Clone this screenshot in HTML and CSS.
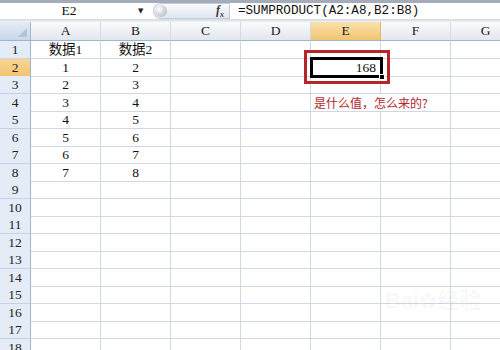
FILE: index.html
```html
<!DOCTYPE html>
<html lang="zh-CN">
<head>
    <meta charset="UTF-8">
    <title>SUMPRODUCT</title>
    <link rel="stylesheet" href="styles.css">
</head>
<body>
    <div class="app">
        <div class="topline"></div>
        <div class="fbar">
            <div class="namebox">E2</div>
            <div class="dd">&#9660;</div>
            <div class="fxbtn">
                <span class="knob"></span>
                <span class="fx">f<sub>x</sub></span>
            </div>
            <div class="formula">=SUMPRODUCT(A2:A8,B2:B8)</div>
        </div>
        <div class="strip"></div>

        <div class="sheet">
            <div class="row head">
                <div class="corner"></div>
                <div class="ch">A</div><div class="ch">B</div><div class="ch">C</div><div class="ch">D</div>
                <div class="ch sel">E</div><div class="ch">F</div><div class="ch">G</div>
            </div>
            <div class="row">
                <div class="rh">1</div>
                <div class="c">数据1</div><div class="c">数据2</div><div class="c"></div><div class="c"></div>
                <div class="c"></div><div class="c"></div><div class="c"></div>
            </div>
            <div class="row">
                <div class="rh sel">2</div>
                <div class="c">1</div><div class="c">2</div><div class="c"></div><div class="c"></div>
                <div class="c num">168</div><div class="c"></div><div class="c"></div>
            </div>
            <div class="row">
                <div class="rh">3</div>
                <div class="c">2</div><div class="c">3</div><div class="c"></div><div class="c"></div>
                <div class="c"></div><div class="c"></div><div class="c"></div>
            </div>
            <div class="row">
                <div class="rh">4</div>
                <div class="c">3</div><div class="c">4</div><div class="c"></div><div class="c"></div>
                <div class="c note">是什么值，怎么来的?</div><div class="c"></div><div class="c"></div>
            </div>
            <div class="row">
                <div class="rh">5</div>
                <div class="c">4</div><div class="c">5</div><div class="c"></div><div class="c"></div>
                <div class="c"></div><div class="c"></div><div class="c"></div>
            </div>
            <div class="row">
                <div class="rh">6</div>
                <div class="c">5</div><div class="c">6</div><div class="c"></div><div class="c"></div>
                <div class="c"></div><div class="c"></div><div class="c"></div>
            </div>
            <div class="row">
                <div class="rh">7</div>
                <div class="c">6</div><div class="c">7</div><div class="c"></div><div class="c"></div>
                <div class="c"></div><div class="c"></div><div class="c"></div>
            </div>
            <div class="row">
                <div class="rh">8</div>
                <div class="c">7</div><div class="c">8</div><div class="c"></div><div class="c"></div>
                <div class="c"></div><div class="c"></div><div class="c"></div>
            </div>
            <div class="row"><div class="rh">9</div><div class="c"></div><div class="c"></div><div class="c"></div><div class="c"></div><div class="c"></div><div class="c"></div><div class="c"></div></div>
            <div class="row"><div class="rh">10</div><div class="c"></div><div class="c"></div><div class="c"></div><div class="c"></div><div class="c"></div><div class="c"></div><div class="c"></div></div>
            <div class="row"><div class="rh">11</div><div class="c"></div><div class="c"></div><div class="c"></div><div class="c"></div><div class="c"></div><div class="c"></div><div class="c"></div></div>
            <div class="row"><div class="rh">12</div><div class="c"></div><div class="c"></div><div class="c"></div><div class="c"></div><div class="c"></div><div class="c"></div><div class="c"></div></div>
            <div class="row"><div class="rh">13</div><div class="c"></div><div class="c"></div><div class="c"></div><div class="c"></div><div class="c"></div><div class="c"></div><div class="c"></div></div>
            <div class="row"><div class="rh">14</div><div class="c"></div><div class="c"></div><div class="c"></div><div class="c"></div><div class="c"></div><div class="c"></div><div class="c"></div></div>
            <div class="row"><div class="rh">15</div><div class="c"></div><div class="c"></div><div class="c"></div><div class="c"></div><div class="c"></div><div class="c"></div><div class="c"></div></div>
            <div class="row"><div class="rh">16</div><div class="c"></div><div class="c"></div><div class="c"></div><div class="c"></div><div class="c"></div><div class="c"></div><div class="c"></div></div>
            <div class="row"><div class="rh">17</div><div class="c"></div><div class="c"></div><div class="c"></div><div class="c"></div><div class="c"></div><div class="c"></div><div class="c"></div></div>
            <div class="row"><div class="rh">18</div><div class="c"></div><div class="c"></div><div class="c"></div><div class="c"></div><div class="c"></div><div class="c"></div><div class="c"></div></div>

            <!-- selection of E2 and the red mark around it -->
            <div class="redbox"></div>
            <div class="cursor"><span class="handle"></span></div>
            <div class="mark">Bai<span class="paw">&#10047;</span>经验<br><small>jingyan.baidu.com</small></div>
        </div>
    </div>
</body>
</html>
```

FILE: styles.css
```css
* {
    margin: 0;
    padding: 0;
    box-sizing: border-box;
}

body {
    font-family: 'Liberation Serif', 'Noto Sans CJK SC', serif;
    font-size: 13.5px;
    color: #111;
    background: #fff;
}

.app {
    width: 500px;
    height: 350px;
    overflow: hidden;
    background: #fff;
}

.topline {
    height: 3px;
    background: #a3acb8;
}

.fbar {
    display: flex;
    align-items: center;
    height: 16px;
    background: #fff;
}

.namebox {
    width: 138px;
    text-align: center;
    font-size: 13.5px;
    line-height: 16px;
}

.dd {
    width: 12px;
    font-size: 7px;
    color: #222;
    font-family: 'DejaVu Sans', sans-serif;
}

.fxbtn {
    position: relative;
    display: flex;
    align-items: center;
    justify-content: flex-end;
    width: 76px;
    height: 16px;
    margin-left: 3px;
    padding-right: 5px;
    border: 1px solid #c3ccd7;
    border-right: none;
    border-radius: 8px 0 0 8px;
    background: linear-gradient(#fbfcfe, #dfe6ef);
}

.knob {
    position: absolute;
    left: 1px;
    top: 1px;
    width: 12px;
    height: 12px;
    border-radius: 50%;
    background: radial-gradient(circle at 35% 35%, #ffffff 0%, #d5d9de 45%, #a8afb8 100%);
}

.fx {
    font-family: 'Liberation Serif', serif;
    font-style: italic;
    font-weight: bold;
    font-size: 12px;
    color: #3b3b3b;
}

.fx sub {
    font-size: 8px;
}

.formula {
    flex: 1;
    height: 16px;
    line-height: 16px;
    padding-left: 8px;
    border-left: 1px solid #c5cdd8;
    font-family: 'Liberation Mono', monospace;
    font-size: 12.6px;
    white-space: nowrap;
}

.strip {
    height: 3px;
    background: linear-gradient(#d3d8df, #eef1f5);
}

.sheet {
    position: relative;
}

.row {
    display: grid;
    grid-template-columns: 31px repeat(7, 70px);
    height: 18px;
}

.row:nth-child(odd) {
    height: 17px;
}

.row.head {
    height: 19px;
}

.corner {
    position: relative;
    background: linear-gradient(#e3ebf6, #c9d7ea);
    border-right: 1px solid #9eb6ce;
    border-bottom: 1px solid #9eb6ce;
}

.corner::after {
    content: "";
    position: absolute;
    right: 3px;
    bottom: 3px;
    border-left: 9px solid transparent;
    border-bottom: 9px solid #b4c3d6;
}

.ch {
    text-align: center;
    line-height: 18px;
    color: #222;
    background: linear-gradient(#f9fafc, #e2e7ee);
    border-right: 1px solid #d3dae3;
    border-bottom: 1px solid #9eb6ce;
}

.ch.sel {
    background: linear-gradient(#fae2ad, #f2c46f);
    border-right-color: #e5b964;
}

.rh {
    text-align: center;
    line-height: 17px;
    color: #222;
    background: #e4ecf7;
    border-right: 1px solid #9eb6ce;
    border-bottom: 1px solid #c5d2e3;
}

.rh.sel {
    background: linear-gradient(#f9d593, #f4c472);
}

.c {
    text-align: center;
    line-height: 17px;
    white-space: nowrap;
    border-right: 1px solid #d0d7e5;
    border-bottom: 1px solid #d0d7e5;
}

.c.num {
    text-align: right;
    padding-right: 4px;
}

.c.note {
    text-align: left;
    padding-left: 3px;
    overflow: visible;
    border-right-color: transparent;
    color: #b3262d;
    font-family: 'Noto Sans CJK SC', sans-serif;
    font-size: 12px;
}

.redbox {
    position: absolute;
    left: 304px;
    top: 28px;
    width: 86px;
    height: 34px;
    border: 3px solid #b3262b;
}

.cursor {
    position: absolute;
    left: 310px;
    top: 35px;
    width: 73px;
    height: 21px;
    border: 3px solid #000;
}

.handle {
    position: absolute;
    right: -5px;
    bottom: -5px;
    width: 6px;
    height: 6px;
    background: #000;
    border: 1px solid #fff;
}

.mark {
    position: absolute;
    left: 385px;
    top: 268px;
    color: rgba(0, 0, 0, 0.035);
    font-family: 'Liberation Sans', 'Noto Sans CJK SC', sans-serif;
    font-size: 22px;
    font-weight: bold;
    line-height: 22px;
    text-align: center;
}

.mark small {
    font-size: 10px;
    font-weight: normal;
}

.paw {
    font-size: 18px;
}
```
